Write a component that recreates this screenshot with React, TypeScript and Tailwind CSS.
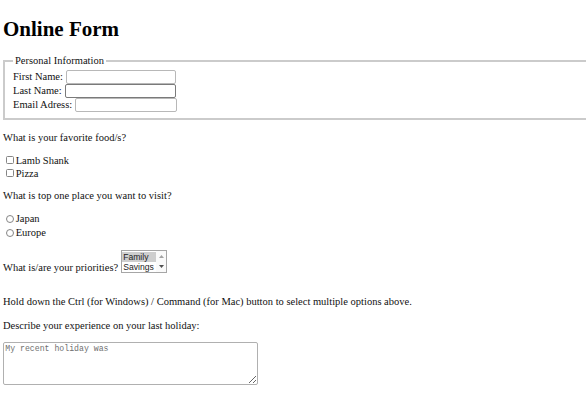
import React from "react";

function Check() {
  return <span className="ml-[2.7px] mr-[2px] box-border h-[8px] w-[8px] shrink-0 rounded-[1.5px] border border-[#858585] bg-white" />;
}

function Radio() {
  return <span className="ml-[2.7px] mr-[2px] box-border h-[8px] w-[8px] shrink-0 rounded-full border border-[#858585] bg-white" />;
}

export default function App() {
  return (
    <div className="h-[409px] w-[586px] overflow-hidden bg-white pl-[3px] font-['Liberation_Serif',serif] text-[10.5px] text-[#111]">
      <h1 className="pt-[17px] text-[21px] font-bold leading-[24px] text-black">Online Form</h1>

      <fieldset className="mt-[13px] w-[640px] border-2 border-solid border-[#cbcbcb] pb-[6px] pl-[8px] pt-[2px]">
        <legend className="px-[2px] leading-[14px]">Personal Information</legend>
        <div className="flex h-[14px] items-center leading-[14px]">
          <span>First Name:</span>
          <input className="ml-[3px] box-border h-[14px] w-[110px] rounded-[2px] border border-[#b8b8b8] bg-white" />
        </div>
        <div className="flex h-[14px] items-center leading-[14px]">
          <span>Last Name:</span>
          <input className="ml-[3px] box-border h-[14px] w-[111px] rounded-[2px] border border-[#7a7a7a] bg-white" />
        </div>
        <div className="flex h-[14px] items-center leading-[14px]">
          <span>Email Adress:</span>
          <input className="ml-[3px] box-border h-[14px] w-[102px] rounded-[2px] border border-[#b8b8b8] bg-white" />
        </div>
      </fieldset>

      <p className="mt-[10.6px] leading-[13px]">What is your favorite food/s?</p>
      <div className="mt-[10.1px] flex h-[13px] items-center leading-[13px]">
        <Check />
        <span>Lamb Shank</span>
      </div>
      <div className="flex h-[13px] items-center leading-[13px]">
        <Check />
        <span>Pizza</span>
      </div>

      <p className="mt-[9px] leading-[13px]">What is top one place you want to visit?</p>
      <div className="mt-[10.15px] flex h-[14px] items-center leading-[14px]">
        <Radio />
        <span>Japan</span>
      </div>
      <div className="flex h-[14px] items-center leading-[14px]">
        <Radio />
        <span>Europe</span>
      </div>

      <div className="mt-[10.2px] flex items-end">
        <span className="leading-[10px]">What is/are your priorities?</span>
        <div className="ml-[3px] box-border flex h-[23.3px] w-[46px] border border-[#a6a6a6] bg-white font-['Liberation_Sans',sans-serif] text-[8.6px] leading-[10.5px] text-[#222]">
          <div className="flex-1 pt-[0.5px]">
            <div className="bg-[#cecece] pl-[1px]">Family</div>
            <div className="pl-[1px]">Savings</div>
          </div>
          <div className="flex w-[10px] flex-col items-center justify-between bg-[#fafafa] pb-[4.5px] pt-[4px]">
            <svg width="5" height="3" viewBox="0 0 5 3">
              <path d="M0 3 L2.5 0 L5 3 Z" fill="#a3a3a3" />
            </svg>
            <svg width="5" height="3" viewBox="0 0 5 3">
              <path d="M0 0 L5 0 L2.5 3 Z" fill="#505050" />
            </svg>
          </div>
        </div>
      </div>

      <p className="mt-[21.7px] leading-[13px]">
        Hold down the Ctrl (for Windows) / Command (for Mac) button to select multiple options above.
      </p>

      <p className="mt-[11px] leading-[13px]">Describe your experience on your last holiday:</p>

      <textarea
        placeholder="My recent holiday was"
        className="mt-[9.7px] box-border block h-[43.5px] w-[255px] rounded-[2px] border border-[#b0b0b0] bg-white px-[1.3px] py-[1px] font-['Liberation_Mono',monospace] text-[8.2px] leading-[10px] placeholder:text-[#707070]"
      />
    </div>
  );
}
